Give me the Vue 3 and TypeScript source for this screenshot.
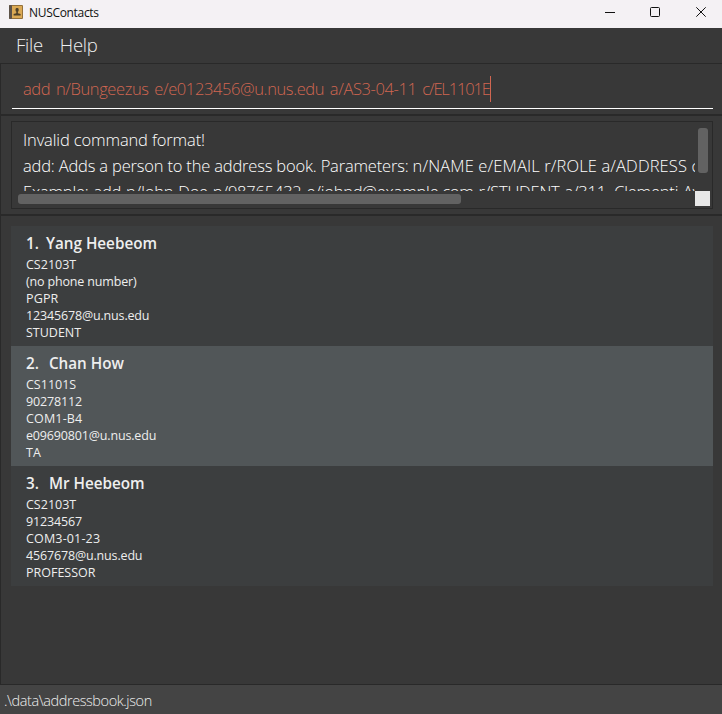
<script setup lang="ts">
import { ref } from 'vue'

interface Person {
  name: string
  course: string
  phone: string
  address: string
  email: string
  role: string
}

const selected = ref(1)
const persons: Person[] = [
  { name: 'Yang Heebeom', course: 'CS2103T', phone: '(no phone number)', address: 'PGPR', email: '12345678@u.nus.edu', role: 'STUDENT' },
  { name: 'Chan How', course: 'CS1101S', phone: '90278112', address: 'COM1-B4', email: 'e09690801@u.nus.edu', role: 'TA' },
  { name: 'Mr Heebeom', course: 'CS2103T', phone: '91234567', address: 'COM3-01-23', email: '4567678@u.nus.edu', role: 'PROFESSOR' },
]
</script>

<template>
  <div class="window">
    <header class="titlebar">
      <svg class="app-icon" width="14" height="14" viewBox="0 0 14 14">
        <rect width="14" height="14" rx="1" fill="#94703a" />
        <rect width="3" height="14" rx="1" fill="#5d5248" />
        <rect x="3" y="1" width="10" height="12" fill="#dba954" />
        <rect x="6.6" y="3" width="3" height="3.6" rx="1.2" fill="#4f4128" />
        <path d="M4.6 10.6V9.1L7.3 8.3V6h1.6v2.3l2.7.8v1.5z" fill="#4f4128" />
      </svg>
      <span class="title">NUSContacts</span>
      <div class="controls">
        <svg width="10" height="10" viewBox="0 0 10 10"><path d="M0 5.5h10" /></svg>
        <svg width="10" height="10" viewBox="0 0 10 10"><rect x=".5" y=".5" width="9" height="9" rx="1" /></svg>
        <svg width="10" height="10" viewBox="0 0 10 10"><path d="M.3.3l9.4 9.4M9.7.3L.3 9.7" /></svg>
      </div>
    </header>
    <nav class="menu"><span>File</span><span>Help</span></nav>
    <section class="command-pane">
      <div class="command"><span>add n/Bungeezus e/e0123456@u.nus.edu a/AS3-04-11 <span class="last">c/EL1101E</span></span><i class="caret" /></div>
    </section>
    <section class="result-pane">
      <div class="result">
        <div class="viewport">
          <p class="r1">Invalid command format!</p>
          <p class="r2">add: Adds a person to the address book. Parameters: <span class="params">n/NAME e/EMAIL r/ROLE a/ADDRESS c/COURSE</span></p>
          <p class="r3">Example: add n/John Doe p/98765432 e/johnd@example.com r/STUDENT a/311, Clementi Ave 2</p>
        </div>
        <div class="vtrack"><div class="vthumb" /></div>
        <div class="htrack"><div class="hthumb" /></div>
        <div class="corner" />
      </div>
    </section>
    <main class="list-pane">
      <ul class="list">
        <li v-for="(p, i) in persons" :key="i" :class="{ selected: i === selected }" @click="selected = i">
          <h2><span>{{ i + 1 }}.</span><span>{{ p.name }}</span></h2>
          <p>{{ p.course }}</p>
          <p class="tight">{{ p.phone }}</p>
          <p class="address">{{ p.address }}</p>
          <p class="tight">{{ p.email }}</p>
          <p>{{ p.role }}</p>
        </li>
      </ul>
    </main>
    <footer class="status">.\data\addressbook.json</footer>
  </div>
</template>

<style>
body { margin: 0; background: #383838; }
</style>

<style scoped>
* { box-sizing: border-box; }
p, h2, ul { margin: 0; padding: 0; }
.window { width: 722px; height: 714px; display: flex; flex-direction: column; overflow: hidden; background: #383838; font-family: "Open Sans", "Noto Sans", sans-serif; }
.titlebar { flex: none; height: 28px; display: flex; align-items: center; padding: 0 16px 4px 9px; background: #f4f1f4; color: #111; }
.title { margin: 1px 0 0 6px; font-size: 12px; line-height: 18px; letter-spacing: -.32px; }
.controls { margin-left: auto; display: flex; gap: 36px; }
.controls svg { fill: none; stroke: #111; stroke-width: 1; }
.controls svg:first-child { margin-right: -1px; }
.menu { flex: none; height: 35px; display: flex; gap: 17px; padding: 0 16px; font-size: 18.5px; font-weight: 300; line-height: 34px; letter-spacing: -.25px; color: #f0f0f0; }
.command-pane { flex: none; height: 52px; border: solid #292929; border-width: 1px 0 1px 1px; padding: 10px 9px 6px 11px; }
.command { height: 35px; display: flex; padding-left: 11px; border-bottom: 1px solid #fff; font-size: 16.5px; font-weight: 300; line-height: 30px; letter-spacing: -.39px; word-spacing: 1.8px; color: #d06651; white-space: nowrap; }
.last { letter-spacing: -1.15px; }
.caret { width: 1px; height: 26px; margin-top: 2px; background: #d06651; }
.result-pane { flex: none; height: 100px; border: solid #292929; border-width: 1px 0 1px 1px; padding: 5px 9px 6px 10px; }
.result { height: 88px; display: grid; grid-template: 64px 15px / 677px 15px; padding: 5px 2px 2px 6px; border: 1px solid #292929; }
.viewport { overflow: hidden; padding-left: 5px; font-size: 16.5px; font-weight: 300; line-height: 26px; color: #fff; white-space: nowrap; }
.r1 { letter-spacing: -.13px; }
.r2 { letter-spacing: -.18px; }
.params { letter-spacing: .13px; }
.r3 { letter-spacing: -.21px; word-spacing: .8px; }
.vthumb { width: 10px; height: 45px; margin: 1px 0 0 3px; border-radius: 3px; background: #626262; }
.hthumb { width: 443px; height: 10px; margin-top: 3px; border-radius: 3px; background: #626262; }
.corner { background: #e8e8e8; }
.list-pane { flex: 1; border: solid #292929; border-width: 1px 0 0 1px; padding: 10px 9px 0 10px; }
.list { list-style: none; }
.list li { height: 120px; padding: 7px 15px 5px; background: #3c3e3f; color: #eee; font-size: 12.5px; line-height: 17px; }
.list li.selected { background: #515658; }
h2 { display: flex; gap: 10px; margin-bottom: 3px; font-size: 15.25px; line-height: 20px; font-weight: 600; }
li:first-child h2 { gap: 7px; }
.tight { letter-spacing: -.16px; }
.address { letter-spacing: .16px; }
.status { flex: none; height: 30px; border-top: 1px solid #292929; padding-left: 4px; background: #444; color: #eee; font-size: 14.5px; font-weight: 300; line-height: 31px; letter-spacing: -.42px; }
</style>
